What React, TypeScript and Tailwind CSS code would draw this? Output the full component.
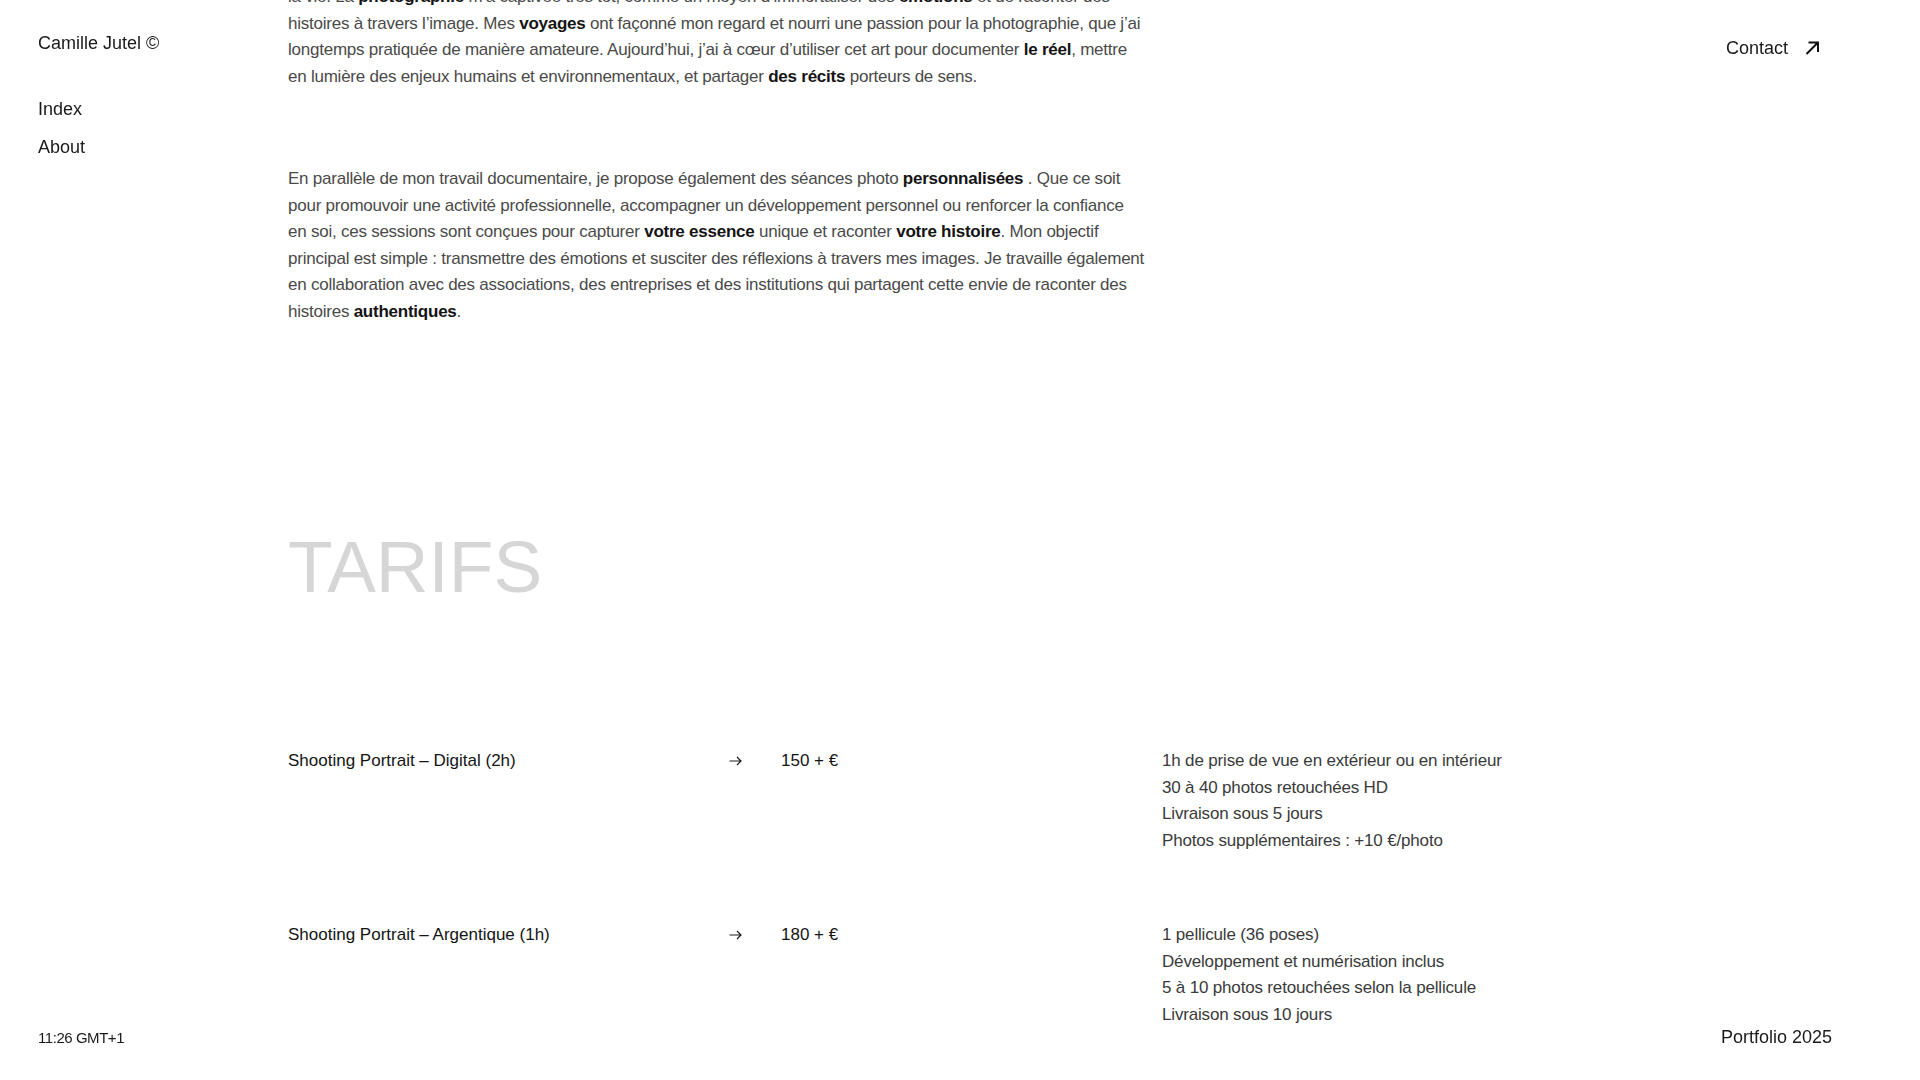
import { ReactNode } from "react";

const font = { fontFamily: '"Liberation Sans", Arial, sans-serif' };

function B({ children }: { children: ReactNode }) {
  return <span className="font-semibold text-[#141414]">{children}</span>;
}

const tarifs = [
  {
    title: "Shooting Portrait – Digital (2h)",
    price: "150 + €",
    details: [
      "1h de prise de vue en extérieur ou en intérieur",
      "30 à 40 photos retouchées HD",
      "Livraison sous 5 jours",
      "Photos supplémentaires : +10 €/photo",
    ],
  },
  {
    title: "Shooting Portrait – Argentique (1h)",
    price: "180 + €",
    details: [
      "1 pellicule (36 poses)",
      "Développement et numérisation inclus",
      "5 à 10 photos retouchées selon la pellicule",
      "Livraison sous 10 jours",
    ],
  },
];

function ArrowRight() {
  return (
    <svg width="13" height="10" viewBox="0 0 13 10" fill="none" className="mt-[8px]">
      <path d="M0.5 5H12M8 1l4 4-4 4" stroke="#1a1a1a" strokeWidth="1.2" />
    </svg>
  );
}

export default function App() {
  return (
    <div className="relative min-h-screen bg-white text-[#1a1a1a]" style={font}>
      {/* fixed corners */}
      <header className="fixed top-[30px] left-[38px] z-10 text-[18px] leading-[26px]">
        <div>Camille Jutel ©</div>
        <nav className="mt-[40px] flex flex-col gap-[12px]">
          <a href="#index">Index</a>
          <a href="#about">About</a>
        </nav>
      </header>

      <a
        href="#contact"
        className="fixed top-[35px] right-[100px] z-10 flex items-center gap-[17px] text-[18px] leading-[26px]"
      >
        Contact
        <svg width="15" height="14" viewBox="0 0 15 14" fill="none">
          <path d="M1.5 13L13 1.5M3.5 1.5H13V11" stroke="#111" strokeWidth="2" />
        </svg>
      </a>

      <div className="fixed bottom-[29px] left-[38px] z-10 text-[15px] leading-[26px] tracking-[-0.03em]">
        11:26 GMT+1
      </div>
      <div className="fixed bottom-[30px] right-[88px] z-10 text-[18px] leading-[26px]">
        Portfolio 2025
      </div>

      <main className="pl-[288px] pb-[200px]">
        <section
          id="about"
          className="w-[880px] text-[17px] leading-[26.5px] tracking-[-0.014em] text-[#4a4a4a]"
        >
          <p className="-mt-[16px] whitespace-nowrap">
            la vie. La <B>photographie</B> m’a captivée très tôt, comme un moyen d’immortaliser des <B>émotions</B> et de raconter des
            <br />
            histoires à travers l’image. Mes <B>voyages</B> ont façonné mon regard et nourri une passion pour la photographie, que j’ai
            <br />
            longtemps pratiquée de manière amateure. Aujourd’hui, j’ai à cœur d’utiliser cet art pour documenter <B>le réel</B>, mettre
            <br />
            en lumière des enjeux humains et environnementaux, et partager <B>des récits</B> porteurs de sens.
          </p>
          <p className="mt-[76px] whitespace-nowrap">
            En parallèle de mon travail documentaire, je propose également des séances photo <B>personnalisées</B> . Que ce soit
            <br />
            pour promouvoir une activité professionnelle, accompagner un développement personnel ou renforcer la confiance
            <br />
            en soi, ces sessions sont conçues pour capturer <B>votre essence</B> unique et raconter <B>votre histoire</B>. Mon objectif
            <br />
            principal est simple : transmettre des émotions et susciter des réflexions à travers mes images. Je travaille également
            <br />
            en collaboration avec des associations, des entreprises et des institutions qui partagent cette envie de raconter des
            <br />
            histoires <B>authentiques</B>.
          </p>
        </section>

        <h2 className="mt-[205px] text-[73px] leading-none text-[#d6d6d6]">TARIFS</h2>

        <section className="mt-[145px] flex flex-col gap-[68px] text-[17px] leading-[26.5px]">
          {tarifs.map((t) => (
            <div key={t.title} className="flex">
              <div className="w-[441px] text-[#141414]">{t.title}</div>
              <div className="w-[52px]">
                <ArrowRight />
              </div>
              <div className="w-[381px] text-[#141414]">{t.price}</div>
              <ul className="tracking-[-0.01em] text-[#3a3a3a]">
                {t.details.map((d) => (
                  <li key={d}>{d}</li>
                ))}
              </ul>
            </div>
          ))}
        </section>
      </main>
    </div>
  );
}
